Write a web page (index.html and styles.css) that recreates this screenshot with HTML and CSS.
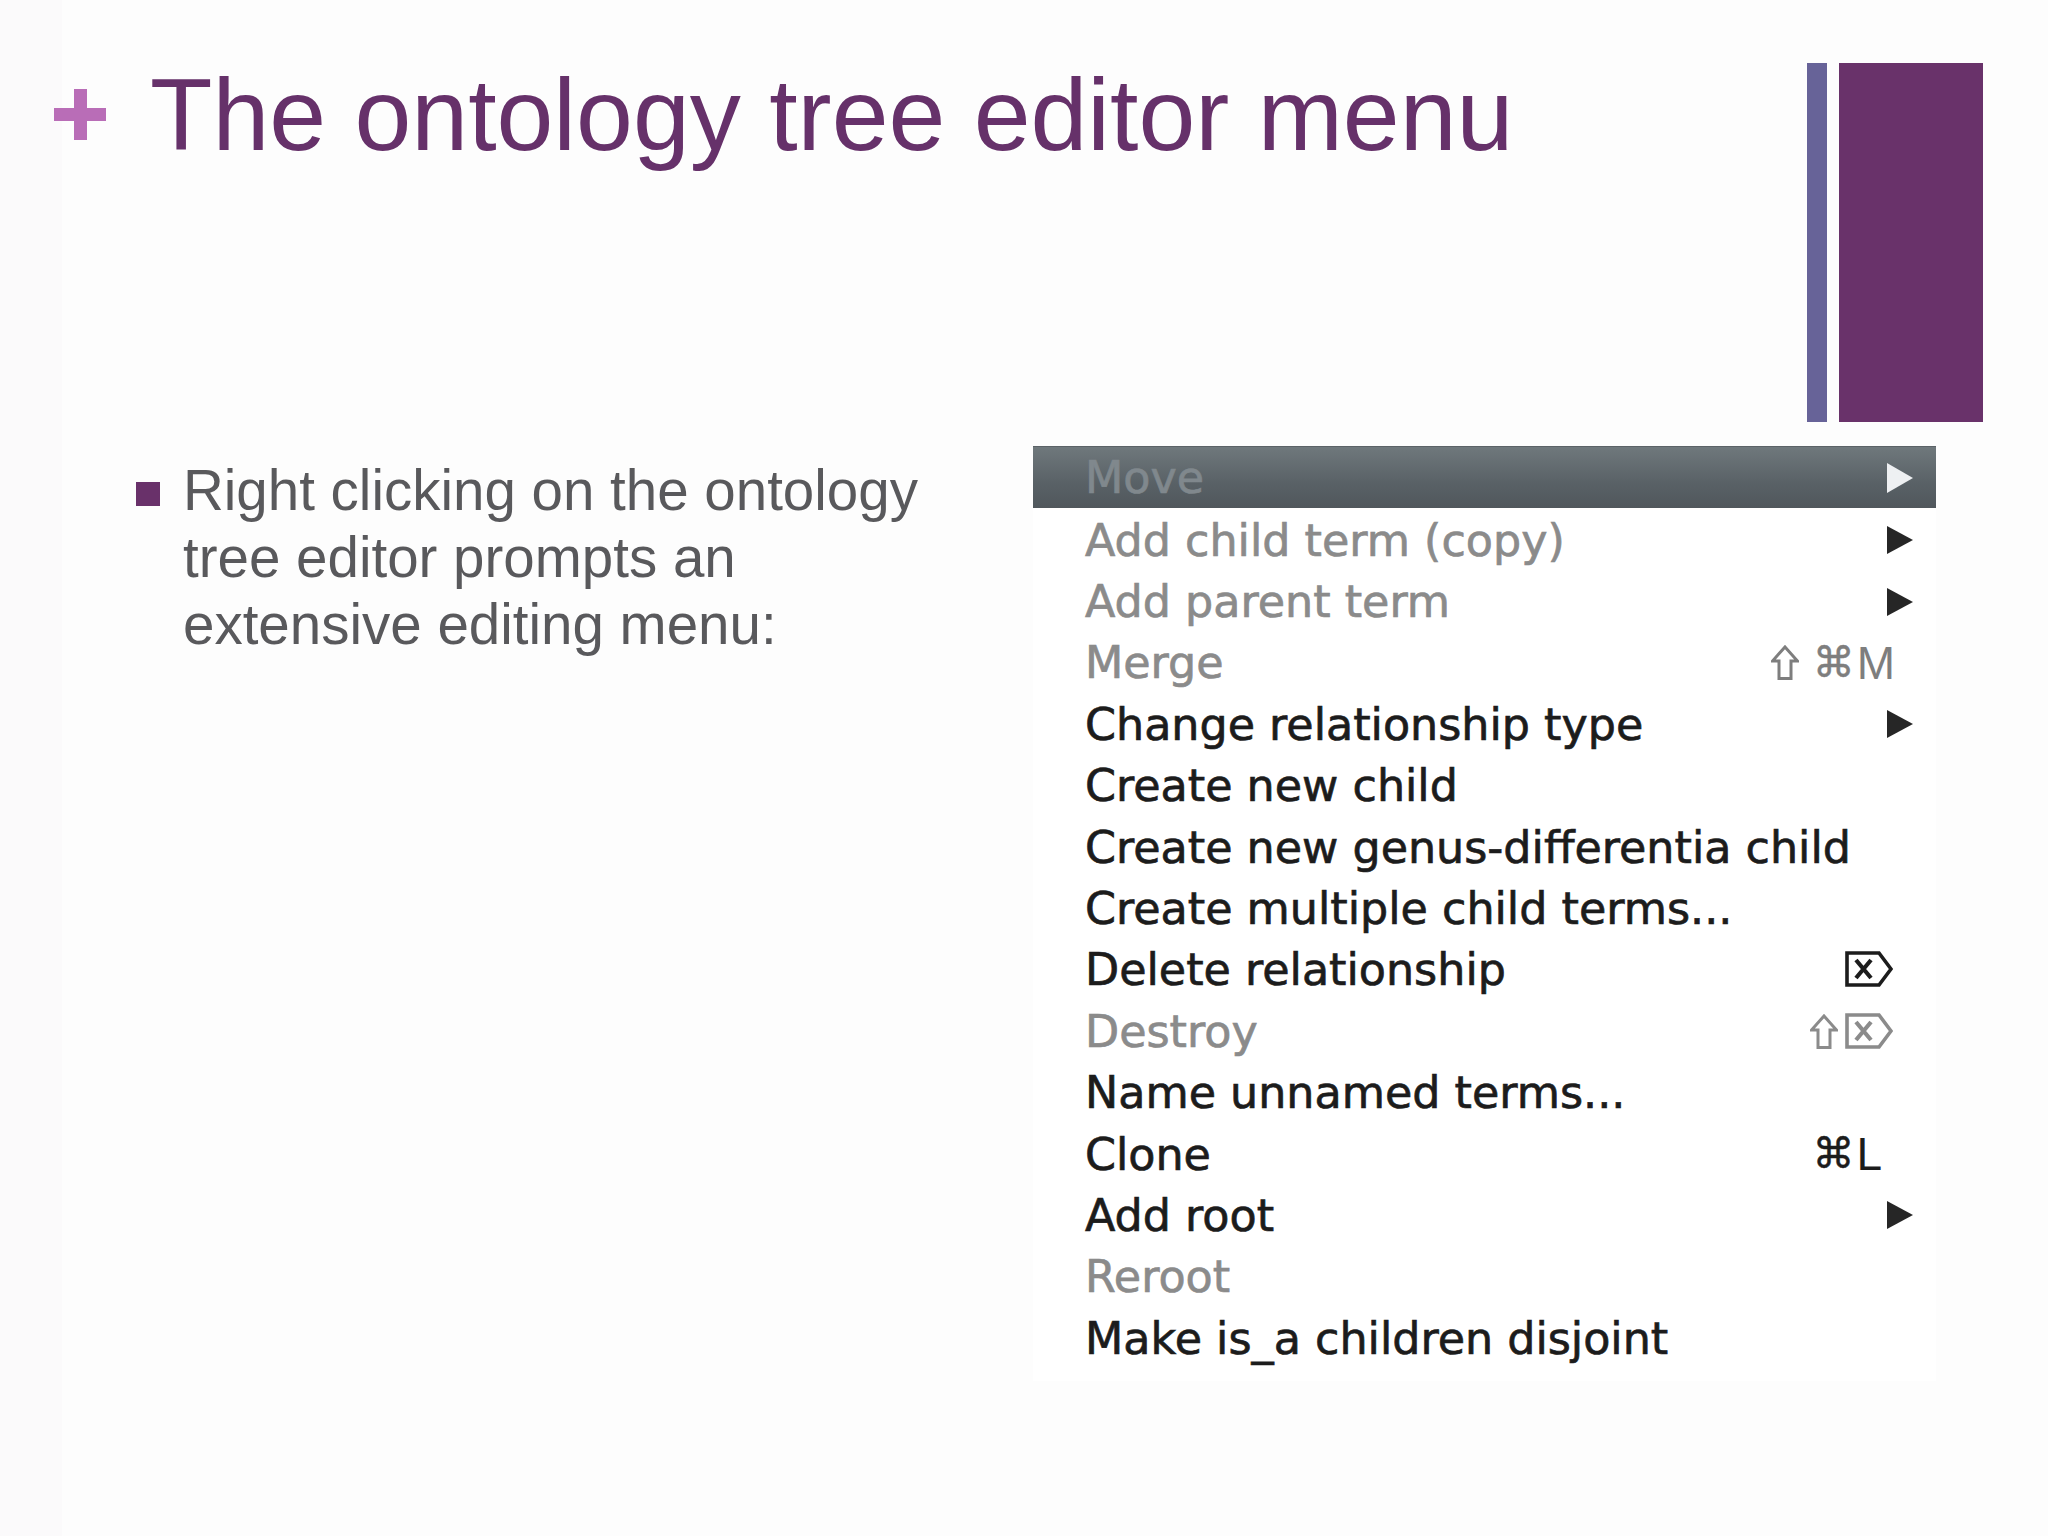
FILE: index.html
```html
<!DOCTYPE html>
<html lang="en">
<head>
<meta charset="utf-8">
<title>The ontology tree editor menu</title>
<link rel="stylesheet" href="styles.css">
</head>
<body>
<div class="slide">
  <div class="top">
    <div class="heading">
      <span class="plus" aria-hidden="true"></span>
      <h1 class="title">The ontology tree editor menu</h1>
    </div>
    <div class="bars" aria-hidden="true">
      <div class="bar-thin"></div>
      <div class="bar-wide"></div>
    </div>
  </div>
  <div class="content">
    <ul class="bullets">
      <li class="bullet"><span class="square"></span><span class="bullet-text">Right clicking on the ontology tree editor prompts an extensive editing menu:</span></li>
    </ul>
    <div class="menu">
      <div class="row hl"><span class="label">Move</span><span class="arrow arrow-white"></span></div>
      <div class="row off"><span class="label">Add child term (copy)</span><span class="arrow"></span></div>
      <div class="row off"><span class="label">Add parent term</span><span class="arrow"></span></div>
      <div class="row off"><span class="label">Merge</span>
        <span class="sc sc-merge">
          <svg class="shift" width="28" height="35" viewBox="0 0 28 35"><path d="M14 2 L26.5 16 H20 V33.5 H8 V16 H1.5 Z" fill="none" stroke="currentColor" stroke-width="3"/></svg>
          <span class="cmd">⌘</span><span class="key">M</span>
        </span>
      </div>
      <div class="row"><span class="label">Change relationship type</span><span class="arrow"></span></div>
      <div class="row"><span class="label">Create new child</span></div>
      <div class="row"><span class="label">Create new genus-differentia child</span></div>
      <div class="row"><span class="label">Create multiple child terms...</span></div>
      <div class="row"><span class="label">Delete relationship</span>
        <span class="sc sc-del">
          <svg class="delkey" width="48" height="36" viewBox="0 0 48 36"><path d="M2 2 H34 L46 18 L34 34 H2 Z" fill="none" stroke="currentColor" stroke-width="3.6"/><path d="M11 9 L26 27 M26 9 L11 27" stroke="currentColor" stroke-width="4.2"/></svg>
        </span>
      </div>
      <div class="row off"><span class="label">Destroy</span>
        <span class="sc sc-destroy">
          <svg class="shift" width="28" height="35" viewBox="0 0 28 35"><path d="M14 2 L26.5 16 H20 V33.5 H8 V16 H1.5 Z" fill="none" stroke="currentColor" stroke-width="3"/></svg>
          <svg class="delkey" width="48" height="36" viewBox="0 0 48 36"><path d="M2 2 H34 L46 18 L34 34 H2 Z" fill="none" stroke="currentColor" stroke-width="3.6"/><path d="M11 9 L26 27 M26 9 L11 27" stroke="currentColor" stroke-width="4.2"/></svg>
        </span>
      </div>
      <div class="row"><span class="label">Name unnamed terms...</span></div>
      <div class="row"><span class="label">Clone</span>
        <span class="sc sc-clone"><span class="cmd">⌘</span><span class="key">L</span></span>
      </div>
      <div class="row"><span class="label">Add root</span><span class="arrow"></span></div>
      <div class="row off"><span class="label">Reroot</span></div>
      <div class="row"><span class="label">Make is_a children disjoint</span></div>
    </div>
  </div>
</div>
</body>
</html>
```

FILE: styles.css
```css
* { box-sizing: border-box; }

html, body {
  margin: 0;
  padding: 0;
  background: #fcfbfc;
}

.slide {
  width: 2048px;
  height: 1536px;
  padding-top: 63px;
  background: linear-gradient(90deg, #fbfafb 0, #fbfafb 62px, #fdfdfd 62px);
  overflow: hidden;
}

/* ---------- top: heading + decorative bars ---------- */
.top {
  display: flex;
  height: 359px;
}

.heading {
  display: flex;
  align-items: flex-start;
  padding-left: 54px;
}

.plus {
  display: block;
  width: 52px;
  height: 51px;
  margin-top: 26px;
  background:
    linear-gradient(#b96db7, #b96db7) center / 52px 13px no-repeat,
    linear-gradient(#b96db7, #b96db7) center / 13px 51px no-repeat;
}

.title {
  margin: 1px 0 0 44px;
  font-family: "Liberation Sans", Arial, sans-serif;
  font-weight: normal;
  font-size: 102.2px;
  line-height: 1;
  color: #66316a;
  white-space: nowrap;
}

.bars {
  display: flex;
  gap: 12px;
  margin-left: auto;
  margin-right: 65px;
}

.bar-thin {
  width: 20px;
  background: #676398;
}

.bar-wide {
  width: 144px;
  background: #69326a;
}

/* ---------- content ---------- */
.content {
  display: flex;
  margin-top: 24px;
}

.bullets {
  list-style: none;
  margin: 0;
  padding: 0 0 0 136px;
  width: 1033px;
}

.bullet {
  display: flex;
  align-items: flex-start;
  margin-top: 11px;
}

.square {
  flex: none;
  width: 24px;
  height: 24px;
  margin-top: 25px;
  background: #69316a;
}

.bullet-text {
  margin-left: 23px;
  max-width: 790px;
  font-family: "Liberation Sans", Arial, sans-serif;
  font-size: 56.5px;
  line-height: 67px;
  color: #59595c;
}

/* ---------- context menu ---------- */
.menu {
  width: 903px;
  background: #ffffff;
  font-family: "DejaVu Sans", "Lucida Grande", sans-serif;
  font-size: 44.4px;
  color: #1c1c1c;
  padding-bottom: 14px;
}

.row {
  display: flex;
  align-items: center;
  height: 61.4px;
  padding: 3px 23px 0 52px;
  white-space: nowrap;
}

.label {
  flex: 1;
  -webkit-text-stroke: 0.7px currentColor;
}

.row.off { color: #8b8b8b; }

.row.hl {
  height: 62px;
  padding-top: 0;
  background: linear-gradient(#6f787c, #596166 60%, #50575c);
  border-top: 1px solid #5b6267;
  color: #80888d;
}

.arrow {
  flex: none;
  width: 0;
  height: 0;
  border-left: 26px solid #262626;
  border-top: 14px solid transparent;
  border-bottom: 14px solid transparent;
}

.arrow-white {
  border-left-color: #eef0f2;
  border-top-width: 15px;
  border-bottom-width: 15px;
}

.sc {
  flex: none;
  display: flex;
  align-items: center;
}

.sc-merge { margin-right: 18px; color: #7e7e7e; }
.sc-del { margin-right: 20px; margin-top: -2px; }
.sc-destroy { margin-right: 20px; gap: 7px; color: #8b8b8b; }
.sc-clone { margin-right: 31px; color: #1c1c1c; }

.shift { display: block; }
.delkey { display: block; }

.cmd {
  font-family: "DejaVu Sans", sans-serif;
  font-size: 42px;
  line-height: 1;
  margin-left: 14px;
  -webkit-text-stroke: 0.5px currentColor;
}

.sc-clone .cmd { margin-left: 0; }

.key {
  font-family: "Liberation Sans", Arial, sans-serif;
  font-size: 46px;
  line-height: 1;
  margin-left: 2px;
}
```
